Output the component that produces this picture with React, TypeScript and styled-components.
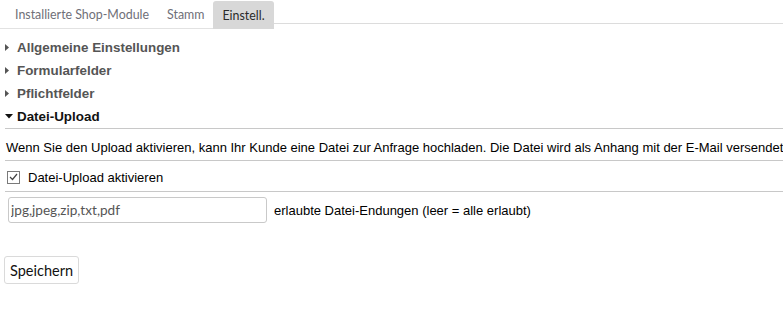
import React, { useState } from "react";
import styled, { createGlobalStyle } from "styled-components";

const GlobalStyle = createGlobalStyle`
  html, body {
    margin: 0;
    padding: 0;
    background: #fff;
  }
  body {
    font-family: "Liberation Sans", Arial, sans-serif;
    font-size: 13px;
    color: #000;
  }
`;

const TabBar = styled.div`
  display: flex;
  align-items: flex-start;
  height: 29px;
`;

const Tab = styled.div<{ $active?: boolean }>`
  height: 28px;
  margin-top: 1px;
  box-sizing: border-box;
  padding: 0 9px;
  display: flex;
  align-items: center;
  font-family: Lato, "Open Sans", sans-serif;
  font-size: 12.4px;
  color: ${(p) => (p.$active ? "#2a2a2a" : "#6f6f78")};
  background: ${(p) => (p.$active ? "#d8d8d8" : "transparent")};
  border-radius: ${(p) => (p.$active ? "3px 3px 0 0" : "0")};
  border-bottom: ${(p) => (p.$active ? "none" : "1px solid #e2e2e2")};
  cursor: pointer;
`;

const FirstTab = styled(Tab)`
  padding-left: 15px;
`;

const TabFiller = styled.div`
  flex: 1;
  height: 23px;
  border-bottom: 1px solid #dcdcdc;
`;

const Panel = styled.div`
  padding: 7px 0 0 5px;
`;

const SectionHead = styled.div<{ $open?: boolean }>`
  display: flex;
  align-items: center;
  height: 23px;
  font-weight: bold;
  font-size: 13.4px;
  color: ${(p) => (p.$open ? "#111" : "#555")};
  cursor: pointer;
`;

const Arrow = styled.span`
  width: 12px;
  display: flex;
  align-items: center;
`;

const Body = styled.div`
  border-top: 1px solid #c8c8c8;
`;

const Row = styled.div`
  border-bottom: 1px solid #c8c8c8;
`;

const Info = styled.div`
  padding: 10px 0 4px 1px;
  line-height: 17px;
  white-space: nowrap;
`;

const CheckRow = styled.label`
  display: flex;
  align-items: center;
  gap: 8px;
  height: 16px;
  padding: 8px 0 6px 2px;
  cursor: pointer;
`;

const Box = styled.span`
  width: 11px;
  height: 11px;
  border: 1px solid #7a7a7a;
  background: #fff;
  display: flex;
  align-items: center;
  justify-content: center;
`;

const InputRow = styled.div`
  display: flex;
  align-items: center;
  gap: 7px;
  padding: 5px 0 0 3px;
`;

const TextInput = styled.input`
  width: 259px;
  height: 26px;
  box-sizing: border-box;
  border: 1px solid #c9c9c9;
  border-radius: 3px;
  padding: 0 2px;
  font-family: Lato, "Open Sans", sans-serif;
  font-size: 13.6px;
  color: #555;
  outline: none;
`;

const Footer = styled.div`
  padding: 33px 0 0 4px;
`;

const Button = styled.button`
  height: 28px;
  padding: 0 5px;
  background: #fff;
  border: 1px solid #dadada;
  border-radius: 3px;
  font-family: Lato, "Open Sans", sans-serif;
  font-size: 14.5px;
  color: #111;
  cursor: pointer;
`;

const RightArrow = () => (
  <svg width="5" height="7" viewBox="0 0 5 7">
    <path d="M0 0 L4 3.5 L0 7 Z" fill="#555" />
  </svg>
);

const DownArrow = () => (
  <svg width="8" height="5" viewBox="0 0 8 5">
    <path d="M0 0 L8 0 L4 4.5 Z" fill="#111" />
  </svg>
);

const Check = () => (
  <svg width="9" height="8" viewBox="0 0 9 8">
    <path d="M1 4 L3.5 6.5 L8 1" stroke="#444" strokeWidth="1.2" fill="none" />
  </svg>
);

export default function App() {
  const [checked, setChecked] = useState(true);
  const [ext, setExt] = useState("jpg,jpeg,zip,txt,pdf");
  const sections = ["Allgemeine Einstellungen", "Formularfelder", "Pflichtfelder"];

  return (
    <>
      <GlobalStyle />
      <TabBar>
        <FirstTab>Installierte Shop-Module</FirstTab>
        <Tab>Stamm</Tab>
        <Tab $active>Einstell.</Tab>
        <TabFiller />
      </TabBar>
      <Panel>
        {sections.map((s) => (
          <SectionHead key={s}>
            <Arrow>
              <RightArrow />
            </Arrow>
            {s}
          </SectionHead>
        ))}
        <SectionHead $open>
          <Arrow>
            <DownArrow />
          </Arrow>
          Datei-Upload
        </SectionHead>
        <Body>
          <Row>
            <Info>
              Wenn Sie den Upload aktivieren, kann Ihr Kunde eine Datei zur Anfrage hochladen. Die Datei wird als Anhang mit der E-Mail versendet
            </Info>
          </Row>
          <Row>
            <CheckRow onClick={() => setChecked(!checked)}>
              <Box>{checked && <Check />}</Box>
              Datei-Upload aktivieren
            </CheckRow>
          </Row>
          <InputRow>
            <TextInput value={ext} onChange={(e) => setExt(e.target.value)} />
            <span>erlaubte Datei-Endungen (leer = alle erlaubt)</span>
          </InputRow>
        </Body>
      </Panel>
      <Footer>
        <Button>Speichern</Button>
      </Footer>
    </>
  );
}
